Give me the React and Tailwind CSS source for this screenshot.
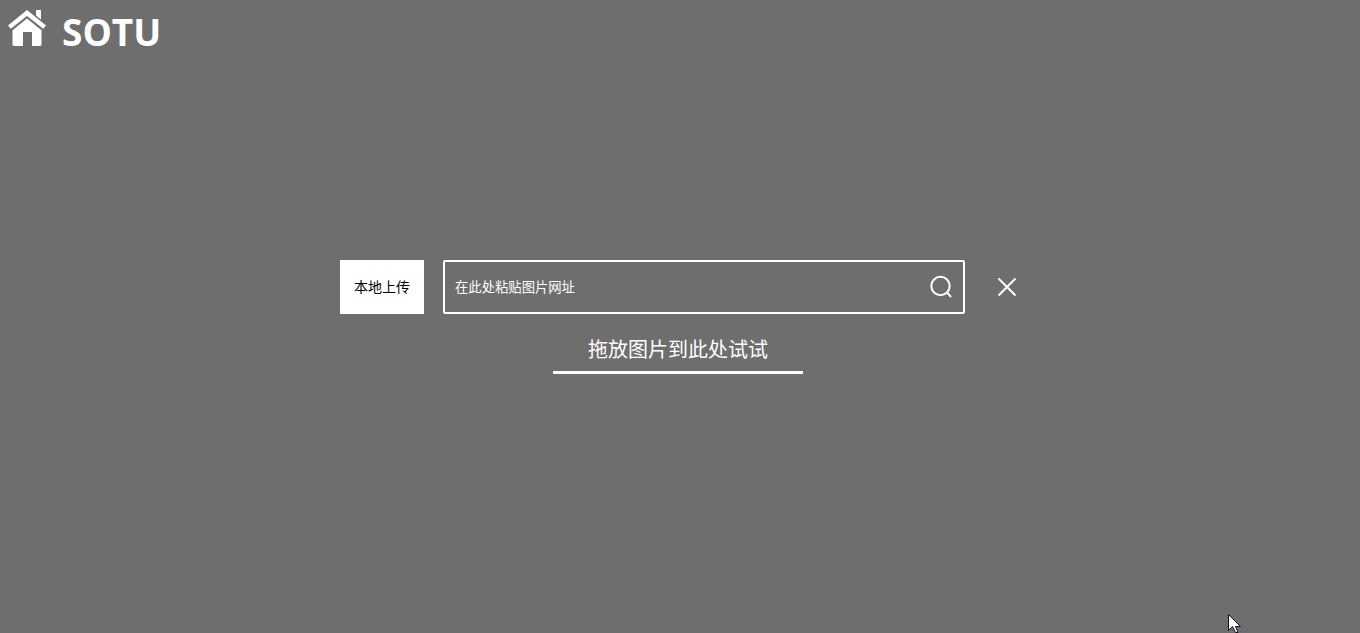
const cjk = "font-['Noto_Sans_CJK_SC','Open_Sans',sans-serif]";

const HomeIcon = () => (
  <svg width="38" height="36" viewBox="0 0 38 36" fill="#fff">
    <path d="M28 0h5v9.5l-5-4z" />
    <path d="M19 0 38 15.4l-2.8 3.4L19 6 2.8 18.8 0 15.4z" />
    <path d="M19 8.6 4.5 20.2v14.4c0 .8.6 1.4 1.4 1.4H15V22h9v14h8.1c.8 0 1.4-.6 1.4-1.4V20.2z" />
  </svg>
);

const SearchIcon = () => (
  <svg width="24" height="24" viewBox="0 0 24 24" fill="none" stroke="#fff" strokeWidth="2" strokeLinecap="round">
    <circle cx="11.5" cy="11" r="9.2" />
    <path d="M18.5 18l3 3.4" />
  </svg>
);

const CloseIcon = () => (
  <svg width="20" height="20" viewBox="0 0 20 20" fill="none" stroke="#fff" strokeWidth="2">
    <path d="M1.5 1.5l17 17M18.5 1.5l-17 17" />
  </svg>
);

const Cursor = () => (
  <svg className="absolute left-[1227px] top-[613px]" width="14" height="20" viewBox="0 0 14 20">
    <path d="M1.5 1.5v16l4-4 3 6h2.5l-2.5-6h5z" fill="#fff" stroke="#1a1024" strokeWidth="1" />
  </svg>
);

export default function App() {
  return (
    <div className={`relative h-[633px] overflow-hidden bg-[#6e6e6e] text-white ${cjk}`}>
      <header className="flex items-start h-[60px] pl-2 pt-[10px]">
        <HomeIcon />
        <span className="ml-4 mt-[3px] text-[37px] font-bold font-['Open_Sans',sans-serif] leading-none">SOTU</span>
      </header>

      <div className="w-[680px] mx-auto mt-[200px]">
        <div className="flex items-center h-[54px]">
          <button className="w-[84px] h-full pb-0.5 bg-white text-black text-sm">本地上传</button>
          <div className="flex items-center flex-1 h-full ml-[19px] pl-2.5 pr-2.5 border-2 border-white rounded-[2px]">
            <input
              className="flex-1 min-w-0 outline-none bg-transparent text-[13.33px] placeholder:text-white"
              placeholder="在此处粘贴图片网址"
            />
            <SearchIcon />
          </div>
          <div className="ml-8 mr-[3px]">
            <CloseIcon />
          </div>
        </div>

        <div className="w-[250px] ml-[213px] mt-[21px] pb-2 border-b-[3px] border-white text-center text-[20px] leading-[28px]">
          拖放图片到此处试试
        </div>
      </div>

      <Cursor />
    </div>
  );
}
